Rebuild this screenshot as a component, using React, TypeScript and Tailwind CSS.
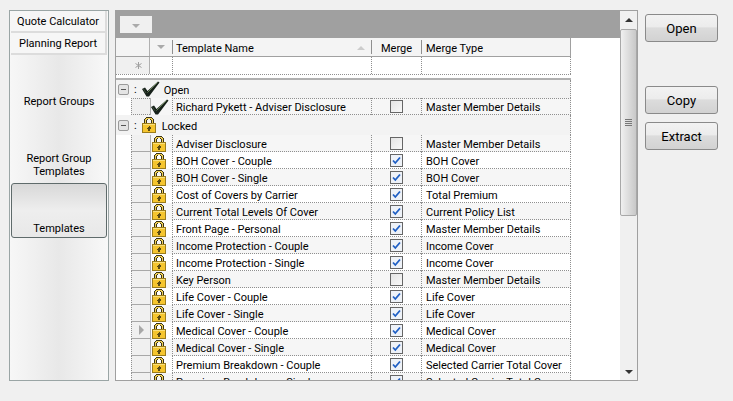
import React from "react";

const rows = [
  ["Adviser Disclosure", false, "Master Member Details"],
  ["BOH Cover - Couple", true, "BOH Cover"],
  ["BOH Cover - Single", true, "BOH Cover"],
  ["Cost of Covers by Carrier", true, "Total Premium"],
  ["Current Total Levels Of Cover", true, "Current Policy List"],
  ["Front Page - Personal", true, "Master Member Details"],
  ["Income Protection - Couple", true, "Income Cover"],
  ["Income Protection - Single", true, "Income Cover"],
  ["Key Person", false, "Master Member Details"],
  ["Life Cover - Couple", true, "Life Cover"],
  ["Life Cover - Single", true, "Life Cover"],
  ["Medical Cover - Couple", true, "Medical Cover"],
  ["Medical Cover - Single", true, "Medical Cover"],
  ["Premium Breakdown - Couple", true, "Selected Carrier Total Cover"],
  ["Premium Breakdown - Single", true, "Selected Carrier Total Cover"],
] as [string, boolean, string][];

const Lock = () => (
  <svg width="14" height="16" viewBox="0 0 14 16" className="shrink-0" shapeRendering="crispEdges">
    <path d="M4 0h6v1h1v1h1v5h-3V3H8V2H6v1H5v4H2V2h1V1h1z" fill="#3a3418" />
    <path d="M4 1h6v1h1v5h-1V3H9V2H5v1H4v4H3V2h1z" fill="#f0cf55" />
    <rect x="0" y="6" width="14" height="10" fill="#9a7c1c" />
    <rect x="1" y="7" width="12" height="8" fill="#f5c52f" />
    <rect x="1" y="7" width="12" height="1" fill="#fbe07a" />
    <path d="M7 9l2 2v1H8v2H6v-2H5v-1z" fill="#5a4a12" />
  </svg>
);

const Check = () => (
  <svg width="18" height="16" viewBox="0 0 18 16" className="shrink-0">
    <path d="M0 8l3-1.500 2.500 3.500L16 0.500l1.500 1L7 15.500H4.500z" fill="#17211a" />
    <path d="M5.500 11.500L15.500 1.500" fill="none" stroke="#6e8a5c" strokeWidth="0.9" />
    <path d="M1.500 8l2.500 4" fill="none" stroke="#43583e" strokeWidth="0.8" />
  </svg>
);

const Box = ({ on }: { on: boolean }) => (
  <div className={`w-[13px] h-[13px] border border-[#666] flex items-center justify-center ${on ? "bg-[#eef2f8]" : "bg-[linear-gradient(135deg,#e4e4e4,#f8f8f8)]"}`}>
    {on && (
      <svg width="9" height="9" viewBox="0 0 9 9">
        <path d="M1 4.500l2.300 2.500L8 1.500" fill="none" stroke="#1f5fc4" strokeWidth="1.800" />
      </svg>
    )}
  </div>
);

const Minus = () => (
  <div className="w-[11px] h-[11px] border border-[#9a9a9a] rounded-[2px] bg-[#e4e4e4] flex items-center justify-center shrink-0">
    <div className="w-[5px] h-px bg-[#555]" />
  </div>
);

const SideTab = ({ label }: { label: string }) => (
  <div className="h-[22px] mx-px border-b-2 border-r-2 border-[#dcdcdc] bg-[#f6f6f6] flex items-center justify-center shrink-0">
    {label}
  </div>
);

const Btn = ({ label, className }: { label: string; className?: string }) => (
  <div className={`h-[28px] w-[73px] rounded-[3px] border border-[#8a8a8a] bg-[linear-gradient(#f2f2f2_0%,#ececec_45%,#dcdcdc_50%,#d2d2d2_100%)] flex items-center justify-center text-[13px] ${className ?? ""}`}>
    {label}
  </div>
);

const Row = ({ name, merge, type, arrow, alt }: { name: string; merge: boolean; type: string; arrow?: boolean; alt: boolean }) => {
  const cell = alt ? "bg-[#f6f6f6]" : "bg-white";
  return (
    <div className="flex h-[17px] shrink-0 ml-[15px] w-[440px]">
      <div className="w-[19px] shrink-0 border-l border-b border-dotted border-[#8f8f8f] [border-bottom-style:solid] border-b-[#a8a8a8] bg-[#f0f0f0] flex items-center justify-center">
        {arrow && <div className="w-0 h-0 border-y-[5px] border-y-transparent border-l-[5px] border-l-[#a8a8a8]" />}
      </div>
      <div className={`w-[22px] shrink-0 flex items-center pl-px border-l border-[#b0b0b0] ${cell}`}><Lock /></div>
      <div className={`w-[199px] shrink-0 pl-[3px] pt-[2px] flex items-center border-l border-b border-dotted border-[#8f8f8f] whitespace-nowrap ${cell}`}>{name}</div>
      <div className={`w-[50px] shrink-0 flex items-center justify-center border-l border-b border-dotted border-[#8f8f8f] ${cell}`}><Box on={merge} /></div>
      <div className={`w-[150px] shrink-0 pl-[4px] pt-[2px] flex items-center border-x border-b border-dotted border-[#8f8f8f] whitespace-nowrap ${cell}`}>{type}</div>
    </div>
  );
};

const GroupRow = ({ icon, label, h, gap }: { icon: React.ReactNode; label: string; h: string; gap: string }) => (
  <div className={`flex items-center shrink-0 w-[455px] pl-[2px] bg-[#f3f3f3] border-r border-dotted border-[#8f8f8f] ${h}`}>
    <Minus />
    <span className="ml-[5px] mr-[5px]">:</span>
    {icon}
    <span className={`pt-[2px] ${gap}`}>{label}</span>
  </div>
);

export default function App() {
  return (
    <div className="w-[733px] h-[401px] bg-[#f0f0f0] overflow-hidden flex items-start text-[11px] leading-none text-black pt-[10px] pl-[9px] font-['Roboto',sans-serif]">
      {/* left tabs */}
      <div className="w-[100px] h-[371px] border border-[#9aa5a5] bg-[linear-gradient(90deg,#f7f7f7,#e8e8e8_50%,#f8f8f8)] flex flex-col shrink-0">
        <SideTab label="Quote Calculator" />
        <SideTab label="Planning Report" />
        <div className="h-[92px] flex items-center justify-center shrink-0">Report Groups</div>
        <div className="h-[36px] flex items-center justify-center text-center leading-[13px] shrink-0">Report Group<br />Templates</div>
        <div className="h-[55px] mx-px rounded-[3px] border border-[#5f6b6b] bg-[linear-gradient(#d8d8d8,#eeeeee_50%,#e8e8e8)] flex items-end justify-center pb-[3px] shrink-0">Templates</div>
      </div>

      {/* grid */}
      <div className="ml-[6px] w-[523px] h-[371px] border border-[#a0a0a0] bg-white flex shrink-0">
        <div className="w-[504px] flex flex-col overflow-hidden">
          <div className="h-[27px] bg-[#a0a0a0] shrink-0 pl-[4px] pt-[5px]">
            <div className="w-[32px] h-[17px] bg-[#f0f0f0] flex items-end justify-center pb-[5px]">
              <div className="w-0 h-0 border-x-[4px] border-x-transparent border-t-[4px] border-t-[#aaa]" />
            </div>
          </div>
          <div className="flex h-[19px] w-[455px] shrink-0 bg-[#f4f4f4] border-b border-[#a0a0a0] border-r">
            <div className="w-[34px] shrink-0 border-r border-[#b0b0b0]" />
            <div className="w-[22px] shrink-0 flex items-center justify-center">
              <div className="w-0 h-0 border-x-[4px] border-x-transparent border-t-[4px] border-t-[#aaa]" />
            </div>
            <div className="w-[199px] shrink-0 pl-[3px] pt-[2px] border-l border-[#8f8f8f] my-[2px] flex items-center justify-between pr-[6px]">
              Template Name
              <div className="w-0 h-0 border-x-[4px] border-x-transparent border-b-[4px] border-b-[#ccc]" />
            </div>
            <div className="w-[50px] shrink-0 pt-[2px] border-l border-[#8f8f8f] my-[2px] flex items-center justify-center">Merge</div>
            <div className="flex-1 pl-[4px] pt-[2px] border-l border-[#8f8f8f] my-[2px] flex items-center">Merge Type</div>
          </div>
          <div className="flex h-[18px] w-[455px] shrink-0 border-b border-dotted border-[#8f8f8f]">
            <div className="w-[34px] shrink-0 bg-[#f0f0f0] border-r border-[#b0b0b0] flex items-center justify-end pr-[6px]">
              <svg width="9" height="9" viewBox="0 0 9 9">
                <path d="M4.500 1v7M1.500 2.500l6 4M7.500 2.500l-6 4" stroke="#a0a0a0" strokeWidth="1" />
              </svg>
            </div>
            <div className="w-[22px] shrink-0" />
            <div className="w-[199px] shrink-0 border-l border-dotted border-[#8f8f8f]" />
            <div className="w-[50px] shrink-0 border-l border-dotted border-[#8f8f8f]" />
            <div className="flex-1 border-x border-dotted border-[#8f8f8f]" />
          </div>
          <div className="h-[5px] w-[455px] shrink-0 border-b-2 border-[#b0b0b0]" />
          <GroupRow icon={<Check />} label="Open" h="h-[18px]" gap="ml-[4px]" />
          <div className="flex h-[17px] shrink-0 ml-[15px] w-[440px]">
            <div className="w-[19px] shrink-0 border border-r-0 border-dotted border-[#8f8f8f] bg-[#f0f0f0]" />
            <div className="w-[22px] shrink-0 flex items-center bg-[#f6f6f6] border-l border-[#b0b0b0]"><Check /></div>
            <div className="w-[199px] shrink-0 pl-[3px] pt-px flex items-center border-l border-y border-dotted border-[#8f8f8f] bg-[#f6f6f6] whitespace-nowrap">Richard Pykett - Adviser Disclosure</div>
            <div className="w-[50px] shrink-0 flex items-center justify-center border-l border-y border-dotted border-[#8f8f8f] bg-[#f6f6f6]"><Box on={false} /></div>
            <div className="w-[150px] shrink-0 pl-[4px] pt-px flex items-center border border-dotted border-[#8f8f8f] bg-[#f6f6f6] whitespace-nowrap">Master Member Details</div>
          </div>
          <GroupRow icon={<Lock />} label="Locked" h="h-[20px]" gap="ml-[6px]" />
          {rows.map(([name, merge, type], i) => (
            <Row key={name} name={name} merge={merge} type={type} arrow={i === 11} alt={i % 2 === 0} />
          ))}
        </div>
        {/* scrollbar */}
        <div className="w-[17px] bg-[#f0f0f0] flex flex-col items-center">
          <div className="h-[18px] flex items-center justify-center shrink-0">
            <div className="w-0 h-0 border-x-[4px] border-x-transparent border-b-[4px] border-b-[#333]" />
          </div>
          <div className="w-full h-[187px] rounded-[2px] border border-[#a8a8a8] bg-[linear-gradient(90deg,#f0f0f0,#dcdcdc_50%,#c8c8c8)] flex flex-col items-center justify-center gap-px">
            <div className="w-[7px] h-px bg-[#777]" />
            <div className="w-[7px] h-px bg-[#777]" />
            <div className="w-[7px] h-px bg-[#777]" />
            <div className="w-[7px] h-px bg-[#777]" />
          </div>
          <div className="flex-1" />
          <div className="h-[17px] flex items-center justify-center shrink-0">
            <div className="w-0 h-0 border-x-[4px] border-x-transparent border-t-[4px] border-t-[#333]" />
          </div>
        </div>
      </div>

      {/* actions */}
      <div className="ml-[7px] pt-[4px] flex flex-col shrink-0">
        <Btn label="Open" />
        <Btn label="Copy" className="mt-[44px]" />
        <Btn label="Extract" className="mt-[8px]" />
      </div>
    </div>
  );
}
